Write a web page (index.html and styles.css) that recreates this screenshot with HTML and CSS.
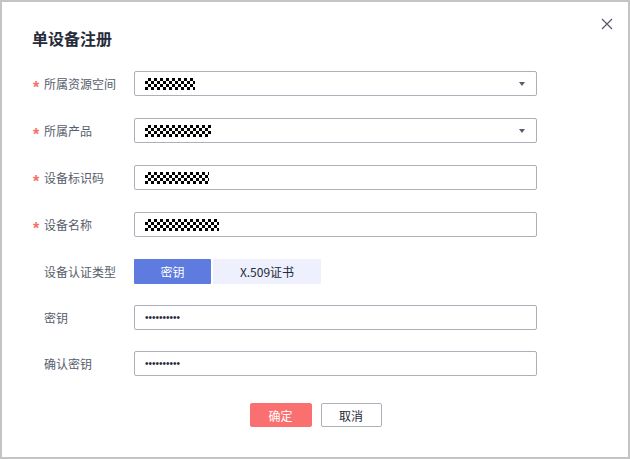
FILE: index.html
```html
<!DOCTYPE html>
<html lang="zh">
<head>
<meta charset="utf-8">
<link rel="stylesheet" href="styles.css">
</head>
<body>
<div class="dialog">
  <button class="close" aria-label="关闭">
    <svg width="12" height="12" viewBox="0 0 12 12"><path d="M1 1L11 11M11 1L1 11" stroke="#575d6c" stroke-width="1.3" fill="none"/></svg>
  </button>
  <h1 class="title">单设备注册</h1>
  <div class="form">
    <div class="row">
      <label class="label"><span class="star">*</span>所属资源空间</label>
      <div class="field select"><span class="mask" style="width:50px"></span><span class="caret"></span></div>
    </div>
    <div class="row">
      <label class="label"><span class="star">*</span>所属产品</label>
      <div class="field select"><span class="mask" style="width:66px"></span><span class="caret"></span></div>
    </div>
    <div class="row">
      <label class="label"><span class="star">*</span>设备标识码</label>
      <div class="field"><span class="mask" style="width:64px"></span></div>
    </div>
    <div class="row">
      <label class="label"><span class="star">*</span>设备名称</label>
      <div class="field"><span class="mask" style="width:74px"></span></div>
    </div>
    <div class="row">
      <label class="label"><span class="star"></span>设备认证类型</label>
      <div class="toggle">
        <span class="opt active">密钥</span>
        <span class="opt cert">X.509证书</span>
      </div>
    </div>
    <div class="row tight">
      <label class="label"><span class="star"></span>密钥</label>
      <div class="field"><span class="dots">••••••••••</span></div>
    </div>
    <div class="row tight">
      <label class="label"><span class="star"></span>确认密钥</label>
      <div class="field"><span class="dots">••••••••••</span></div>
    </div>
  </div>
  <div class="actions">
    <button class="btn primary">确定</button>
    <button class="btn cancel">取消</button>
  </div>
</div>
</body>
</html>
```
FILE: styles.css
```css
* { box-sizing: border-box; }
html, body { margin: 0; padding: 0; background: #fff; }
body {
  width: 630px;
  height: 459px;
  border: 2px solid #c4c4c4;
  font-family: "Noto Sans CJK SC", "Noto Sans", sans-serif;
  font-size: 12px;
  color: #252b3a;
  overflow: hidden;
}
.dialog {
  position: relative;
  padding: 26px 91px 0 30px;
}
.close {
  position: absolute;
  top: 15px;
  right: 14px;
  width: 14px;
  height: 14px;
  padding: 0;
  border: 0;
  background: none;
  display: flex;
  align-items: center;
  justify-content: center;
}
.title {
  margin: 0;
  font-size: 16px;
  line-height: 20px;
  font-weight: 700;
  color: #252b3a;
}
.form {
  margin-top: 23px;
  display: flex;
  flex-direction: column;
  gap: 22px;
}
.row {
  display: flex;
  align-items: center;
  height: 25px;
}
.row.tight { margin-top: -1px; }
.label {
  width: 102px;
  flex: none;
  display: flex;
  align-items: center;
  color: #575d6c;
  font-size: 12px;
}
.star {
  width: 12px;
  flex: none;
  color: #f66f6a;
  font-family: "Liberation Sans", sans-serif;
  font-size: 16px;
  font-weight: 700;
  padding-left: 1px;
  line-height: 12px;
  padding-top: 6px;
  height: 16px;
}
.field {
  flex: 1;
  height: 25px;
  border: 1px solid #adb0b8;
  border-radius: 2px;
  display: flex;
  align-items: center;
  padding: 0 10px 0 10px;
}
.mask {
  display: block;
  height: 12px;
  background: repeating-conic-gradient(#000 0 25%, #fff 0 50%) 0 0 / 6px 6px;
}
.select { justify-content: space-between; }
.caret {
  width: 0;
  height: 0;
  border-left: 3px solid transparent;
  border-right: 3px solid transparent;
  border-top: 4px solid #575d6c;
  margin-right: 1px;
}
.dots {
  font-family: "Liberation Sans", sans-serif;
  font-size: 10px;
  letter-spacing: 0;
  color: #252b3a;
  line-height: 12px;
}
.toggle {
  display: flex;
  gap: 2px;
  height: 25px;
}
.opt {
  display: flex;
  align-items: center;
  justify-content: center;
  height: 25px;
  border-radius: 1px;
  font-size: 12px;
}
.opt.active {
  width: 77px;
  background: #5e7ce0;
  color: #fff;
}
.opt.cert {
  width: 108px;
  background: #eef0fd;
  color: #252b3a;
}
.actions {
  margin: 27px 0 0 62px;
  display: flex;
  justify-content: center;
  gap: 9px;
}
.btn {
  width: 62px;
  height: 24px;
  border: 1px solid #adb0b8;
  border-radius: 2px;
  background: #fff;
  color: #252b3a;
  font-family: inherit;
  font-size: 12px;
  padding: 0;
}
.btn.cancel { width: 61px; }
.btn.primary {
  background: #fa7070;
  border-color: #fa7070;
  color: #fff;
}
```
